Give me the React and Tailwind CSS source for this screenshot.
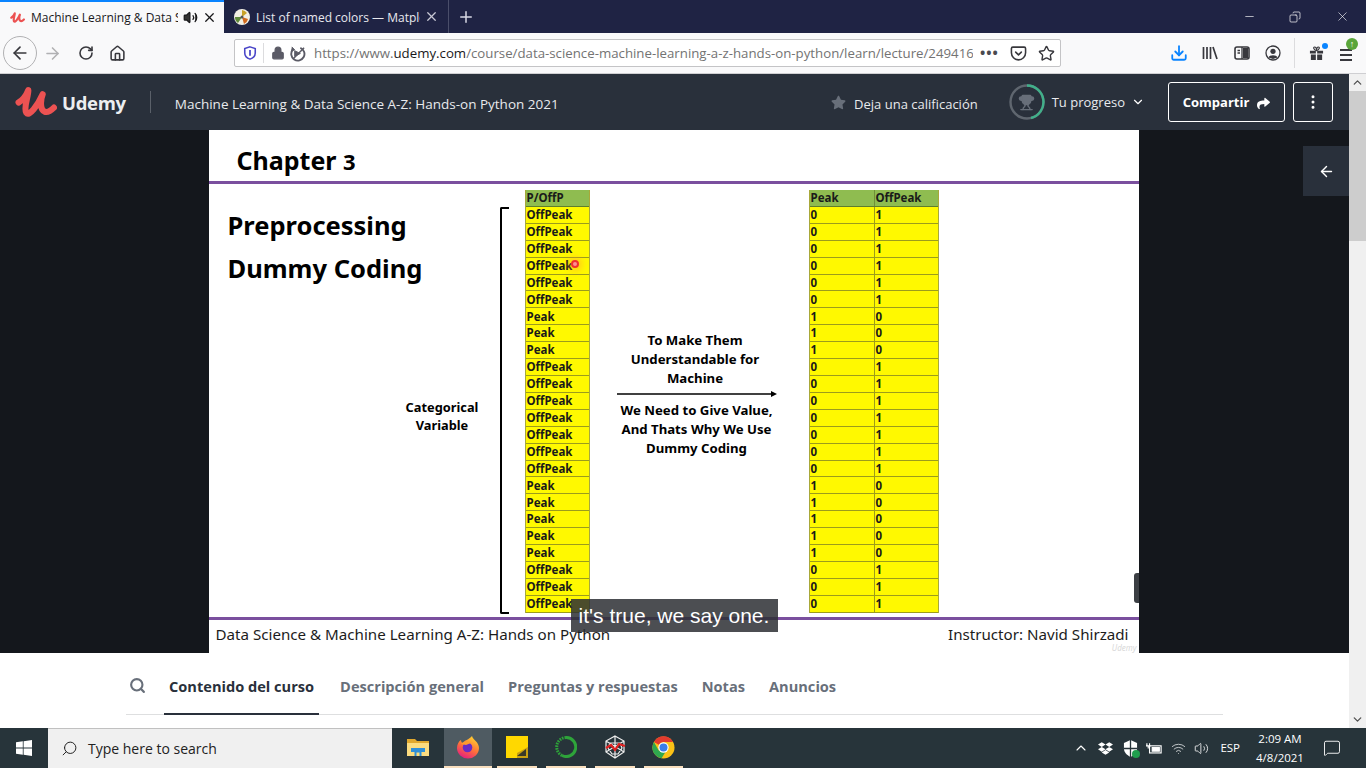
import {
  ArrowLeft, ArrowRight, RotateCw, Lock, Star, Download, X, Plus, Minus, Search,
  ChevronDown, ChevronUp, EllipsisVertical, Volume2, Trophy, Wifi, MessageSquare, Copy, House, Pocket,
} from 'lucide-react'
import { FaDropbox, FaShare, FaStar } from 'react-icons/fa'

const UI = { fontFamily: '"Open Sans", "Noto Sans", sans-serif' }
const SLIDE = { fontFamily: '"Noto Sans", "Open Sans", sans-serif' }

// 24 data rows of the slide table
const ROWS = [
  ...Array(6).fill(0), ...Array(3).fill(1), ...Array(7).fill(0), ...Array(5).fill(1), ...Array(3).fill(0),
]

function UdemyMark({ className }) {
  return (
    <svg viewBox="0 0 41 33" className={className} fill="none" stroke="#ec5252" strokeLinecap="round" strokeLinejoin="round">
      <path d="M3.5 17 C7 15 11 10 13 5 C13 12 8 22 11 27 C14 31 22 20 27 9 C25 14 24 24 29 26 C32 27 35 25 38 22" strokeWidth="6" />
    </svg>
  )
}

function TabStrip() {
  return (
    <div className="h-[33px] bg-[#1f2344] flex items-stretch text-[12px]" style={UI}>
      <div className="w-[224px] bg-[#f9f9fa] border-t-2 border-[#0a84ff] flex items-center text-[#18181a]">
        <UdemyMark className="w-[15px] h-[13px] ml-[10px] shrink-0" />
        <span className="ml-[6px] w-[147px] pt-px overflow-hidden whitespace-nowrap">Machine Learning &amp; Data Science</span>
        <Volume2 size={15} className="ml-[5px] shrink-0" fill="#333" />
        <X size={15} className="ml-[4px] shrink-0" />
      </div>
      <div className="w-[225px] flex items-center text-[#e8e8ee] border-r border-[#4a4e6a]">
        <svg viewBox="0 0 16 16" className="w-4 h-4 ml-[10px] shrink-0">
          <circle cx="8" cy="8" r="8" fill="#f2efe4" />
          <path d="M8 8 L8 1 A7 7 0 0 1 13 4Z" fill="#c9a227" />
          <path d="M8 8 L14 10 A7 7 0 0 1 10 15Z" fill="#d2691e" />
          <path d="M8 8 L4 14 A7 7 0 0 1 1 8Z" fill="#5f8a3a" />
          <circle cx="8" cy="8" r="1.5" fill="#555" />
        </svg>
        <span className="ml-[6px] w-[164px] pt-[3px] overflow-hidden whitespace-nowrap">List of named colors — Matplotlib</span>
        <X size={15} className="ml-[4px] shrink-0 text-[#c8c8d4]" />
      </div>
      <Plus size={18} className="ml-[8px] self-center text-[#d8d8e4]" />
      <div className="flex-1" />
      <div className="flex items-center text-white">
        <Minus size={13} className="mr-[33px]" strokeWidth={1.2} />
        <Copy size={12} className="mr-[34px] -scale-x-100" strokeWidth={1.4} />
        <X size={15} className="mr-[16px]" strokeWidth={1} />
      </div>
    </div>
  )
}

function Toolbar() {
  return (
    <div className="h-[41px] bg-[#f9f9fa] border-b border-[#cfcfd2] flex items-center text-[#38383d]">
      <div className="ml-[3px] w-[34px] h-[34px] rounded-full border border-[#b1b1b3] flex items-center justify-center">
        <ArrowLeft size={20} />
      </div>
      <ArrowRight size={19} className="ml-[6px] text-[#b1b1b3]" />
      <RotateCw size={16} strokeWidth={2.4} className="ml-[16px]" />
      <House size={17} strokeWidth={2.2} className="ml-[15px]" />

      <div className="ml-[108px] w-[827px] h-[28px] bg-white border border-[#c4c4c6] rounded-[2px] flex items-center">
        <svg viewBox="0 0 16 16" className="w-[14px] h-[14px] ml-[8px]">
          <path d="M8 1 L14 3 V8 C14 11.5 11 14 8 15 C5 14 2 11.5 2 8 V3Z" fill="none" stroke="#4a46c8" strokeWidth="1.8" />
          <path d="M8 4.5 V11" stroke="#4a46c8" strokeWidth="2" />
        </svg>
        <div className="w-px h-[20px] bg-[#dcdcde] ml-[6px]" />
        <Lock size={14} fill="#5b5b66" className="ml-[7px] text-[#5b5b66]" />
        <svg viewBox="0 0 18 18" className="ml-[4px] w-[17px] h-[17px]" fill="none" stroke="#5b5b66" strokeWidth="2">
          <path d="M4 5 A7 7 0 1 0 12 3" />
          <path d="M3 2 L6 5 L2 7" fill="#5b5b66" strokeWidth="1" />
          <path d="M6 6 L12 9 L6 12Z" fill="#5b5b66" strokeWidth="1" />
          <path d="M4 15 L16 3" strokeWidth="1.6" />
        </svg>
        <div className="ml-[8px] w-[659px] pt-[2px] overflow-hidden whitespace-nowrap text-[13.25px] text-[#737373]" style={UI}>
          https://www.<span className="text-[#18181a]">udemy.com</span>/course/data-science-machine-learning-a-z-hands-on-python/learn/lecture/249416
        </div>
        <span className="ml-[7px] text-[#4a4a4f] text-[14px] font-bold leading-none tracking-[1px]">•••</span>
        <Pocket size={17} strokeWidth={2.2} className="ml-[11px]" />
        <Star size={17} strokeWidth={2} className="ml-[11px]" />
      </div>

      <div className="ml-[109px] flex items-center">
        <Download size={18} strokeWidth={2.4} className="text-[#0a84ff]" />
        <svg viewBox="0 0 16 16" className="ml-[14px] w-[16px] h-[16px]" fill="none" stroke="#38383d" strokeWidth="1.7">
          <path d="M1.5 2 V14 M5 2 V14 M8.5 2 V14 M11 2 L15 14" />
        </svg>
        <svg viewBox="0 0 16 16" className="ml-[16px] w-[16px] h-[16px]" fill="none" stroke="#38383d" strokeWidth="1.6">
          <rect x="1" y="2" width="14" height="12" rx="2" />
          <path d="M8 2 V14 M3.5 5.5 H6 M3.5 8 H6" strokeWidth="1.3" />
          <rect x="9" y="3" width="5" height="10" fill="#38383d" stroke="none" />
        </svg>
        <svg viewBox="0 0 16 16" className="ml-[15px] w-[16px] h-[16px]" fill="none" stroke="#38383d" strokeWidth="1.3">
          <circle cx="8" cy="8" r="7" />
          <circle cx="8" cy="6.3" r="2.6" fill="#38383d" stroke="none" />
          <path d="M3.5 12.5 C4.5 9.5 11.5 9.5 12.5 12.5 L8 14Z" fill="#38383d" stroke="none" />
        </svg>
        <div className="w-px h-[30px] bg-[#dcdcde] ml-[13px]" />
        <div className="relative ml-[14px]">
          <svg viewBox="0 0 16 16" className="w-[15px] h-[15px]" fill="#38383d">
            <path d="M1 5 H7.3 V8 H1Z M8.7 5 H15 V8 H8.7Z M2 9 H7.3 V15 H2Z M8.7 9 H14 V15 H8.7Z" />
            <path d="M8 5 C5 4 4 1 6 1 C7.5 1 8 3.5 8 5 C8 3.5 8.5 1 10 1 C12 1 11 4 8 5Z" fill="none" stroke="#38383d" strokeWidth="1.2" />
          </svg>
          <span className="absolute -top-[3px] -right-[4px] w-[6px] h-[6px] rounded-full bg-[#0a84ff]" />
        </div>
        <div className="relative ml-[16px] w-[12px] flex flex-col gap-[3px] pt-[3px]">
          <div className="h-[2px] bg-[#38383d]" />
          <div className="h-[2px] bg-[#38383d]" />
          <div className="h-[2px] bg-[#38383d]" />
          <span className="absolute -top-[8px] -right-[6px] w-[12px] h-[12px] rounded-full bg-[#5aa53a] flex items-center justify-center text-white text-[9px] font-bold leading-none">↑</span>
        </div>
      </div>
    </div>
  )
}

function CourseHeader() {
  return (
    <div className="h-[56px] bg-[#29303b] flex items-center text-white" style={UI}>
      <UdemyMark className="w-[42px] h-[34px] ml-[15px]" />
      <span className="ml-[5px] pt-[1px] text-[18.5px] font-bold text-[#eceef0] tracking-[-0.3px]">Udemy</span>
      <div className="ml-[24px] w-px h-[22px] bg-[#5a6069]" />
      <span className="ml-[24px] pt-[5px] text-[13.5px] text-[#e8eaed] whitespace-nowrap">Machine Learning &amp; Data Science A-Z: Hands-on Python 2021</span>
      <div className="flex-1" />
      <FaStar size={15} className="text-[#686f7a]" />
      <span className="ml-[8px] pt-[5px] text-[13px] text-[#e8eaed]">Deja una calificación</span>
      <div className="relative ml-[31px] w-[36px] h-[36px] flex items-center justify-center">
        <svg viewBox="0 0 36 36" className="absolute w-full h-full">
          <circle cx="18" cy="18" r="16.5" fill="none" stroke="#5f666f" strokeWidth="2.4" />
          <path d="M18 1.5 A16.5 16.5 0 0 1 22 34" fill="none" stroke="#41b08a" strokeWidth="2.4" />
        </svg>
        <Trophy size={17} fill="#686f7a" className="text-[#686f7a]" />
      </div>
      <span className="ml-[7px] pt-[2px] text-[13px] text-[#e8eaed]">Tu progreso</span>
      <ChevronDown size={14} className="ml-[6px]" />
      <div className="ml-[23px] w-[117px] h-[40px] pt-[2px] border border-white rounded-[3px] flex items-center justify-center text-[13px] font-bold">
        Compartir
        <FaShare size={13} className="ml-[8px]" />
      </div>
      <div className="ml-[8px] w-[40px] h-[40px] border border-white rounded-[3px] flex items-center justify-center">
        <EllipsisVertical size={18} />
      </div>
      <div className="w-[16px]" />
    </div>
  )
}

function SlideTable({ headers, renderRow, widths }) {
  return (
    <div className="flex flex-col border-x border-[#a8a83a] shrink-0" style={SLIDE}>
      <div className="h-[16.92px] flex bg-[#8fbc50] border-b border-[#5f7f2c] text-[11.5px] leading-none font-bold text-[#1a1a1a]">
        {headers.map((h, i) => (
          <div key={h} className={`${widths[i]} ${i ? 'border-l border-[#6f8f38]' : ''} pl-px flex items-center`}>{h}</div>
        ))}
      </div>
      {ROWS.map((v, r) => (
        <div key={r} className="h-[16.92px] flex bg-[#fff900] border-b border-[#9c9c1c] text-[11.5px] leading-none font-bold text-[#1a1a1a]">
          {renderRow(v).map((c, i) => (
            <div key={i} className={`${widths[i]} ${i ? 'border-l border-[#9c9c1c]' : ''} pl-px flex items-center`}>{c}</div>
          ))}
        </div>
      ))}
    </div>
  )
}

function Slide() {
  return (
    <div className="relative w-[930px] h-[523px] bg-white flex flex-col text-black" style={SLIDE}>
      <div className="h-[54px] border-b-[3px] border-[#7a4f9e] pl-[28px] pt-[13px] text-[25px] leading-[34px] font-bold">
        Chapter <span className="text-[22px]">3</span>
      </div>

      <div className="flex-1 flex min-h-0">
        <div className="w-[197px] pl-[19px] pt-[20px] shrink-0 text-[25.5px] leading-[43px] font-bold whitespace-nowrap">
          <div>Preprocessing</div>
          <div>Dummy Coding</div>
        </div>
        <div className="w-[73px] shrink-0 pt-[214px] text-center text-[12.8px] leading-[18px] font-bold whitespace-nowrap">
          <div>Categorical</div>
          <div>Variable</div>
        </div>
        <div className="ml-[21px] mt-[23px] h-[407px] w-[9px] shrink-0 border-y-2 border-l-2 border-black rounded-l-[2px]" />
        <div className="ml-[16px] mt-[6px]">
          <SlideTable headers={['P/OffP']} widths={['w-[63px]']} renderRow={v => [v ? 'Peak' : 'OffPeak']} />
        </div>
        <div className="w-[211px] mr-[8px] shrink-0 pt-[147px] flex flex-col items-center text-[13.2px] leading-[19px] font-bold text-center">
          <div>To Make Them<br />Understandable for<br />Machine</div>
          <svg viewBox="0 0 160 6" className="w-[160px] h-[6px] mt-[3px] ml-[4px]">
            <path d="M0 3 H155" stroke="#000" strokeWidth="1.6" />
            <path d="M154 0 L160 3 L154 6Z" fill="#000" />
          </svg>
          <div className="mt-[4px] ml-[3px]">We Need to Give Value,<br />And Thats Why We Use<br />Dummy Coding</div>
        </div>
        <div className="mt-[6px]">
          <SlideTable headers={['Peak', 'OffPeak']} widths={['w-[64px]', 'w-[64px]']} renderRow={v => [v, v ? 0 : 1]} />
        </div>
      </div>

      <div className="h-[36px] border-t-[3px] border-[#7a4f9e] flex items-center justify-between pl-[7px] pr-[10px] pb-[5px] text-[15.15px] text-[#1c1c1c] whitespace-nowrap">
        <span>Data Science &amp; Machine Learning A-Z: Hands on Python</span>
        <span>Instructor: Navid Shirzadi</span>
      </div>

      {/* cursor highlight, caption and player handle sit over the slide */}
      <span className="absolute left-[362px] top-[130px] w-[8px] h-[8px] rounded-full border-2 border-[#f03030] bg-[#ff9090] shadow-[0_0_6px_3px_rgba(255,150,60,0.45)]" />
      <span className="absolute right-0 top-[443px] w-[5px] h-[30px] rounded-l-[3px] bg-[#3c3f44]" />
      <span className="absolute right-[2px] bottom-0 text-[8px] leading-[10px] italic text-[#d8d8d8]">Udemy</span>
      <div className="absolute left-[362px] top-[469px] w-[207px] h-[33px] bg-[#2d2f34]/85 flex items-center justify-center text-[21px] text-white whitespace-nowrap" style={{ fontFamily: '"Liberation Sans", sans-serif' }}>
        it's true, we say one.
      </div>
    </div>
  )
}

function CourseTabs() {
  const tabs = ['Descripción general', 'Preguntas y respuestas', 'Notas', 'Anuncios']
  return (
    <div className="h-[75px] bg-white pl-[126px] pr-[126px]" style={UI}>
      <div className="h-[62px] border-b border-[#dedfe0] flex items-stretch text-[14.6px] font-bold text-[#686f7a] whitespace-nowrap">
        <div className="w-[38px] pl-[3px] pt-[24px]">
          <Search size={17} strokeWidth={3} className="text-[#686f7a]" />
        </div>
        <div className="h-[62px] px-[5px] pt-[23px] border-b-2 border-[#29303b] text-[#29303b]">Contenido del curso</div>
        {tabs.map((t, i) => (
          <div key={t} className={`${i === 0 ? 'ml-[21px]' : 'ml-[24px]'} pt-[23px]`}>{t}</div>
        ))}
      </div>
    </div>
  )
}

function Taskbar() {
  return (
    <div className="h-[40px] bg-[#27343a] flex items-stretch text-white" style={UI}>
      <div className="w-[48px] flex items-center justify-center">
        <svg viewBox="0 0 16 16" className="w-[16px] h-[16px]" fill="#fff">
          <path d="M0 2.3 L6.8 1.3 V7.6 H0Z M7.6 1.2 L16 0 V7.6 H7.6Z M0 8.4 H6.8 V14.7 L0 13.7Z M7.6 8.4 H16 V16 L7.6 14.8Z" />
        </svg>
      </div>
      <div className="w-[344px] bg-[#f0f0f0] border-t border-[#c0c0c0] flex items-center text-[#222] text-[14px]">
        <Search size={17} className="ml-[13px] -scale-x-100" strokeWidth={1.4} />
        <span className="ml-[10px]">Type here to search</span>
      </div>
      <div className="w-[52px] flex items-center justify-center">
        <svg viewBox="0 0 22 20" className="w-[22px] h-[20px]">
          <path d="M0 1 H8 L10 3 H22 V18 H0Z" fill="#e0a82e" />
          <path d="M0 5 H22 V18 H0Z" fill="#fbdc80" />
          <path d="M4 10 H18 V14 H14.5 V18 H7.5 V14 H4Z M9.5 14.5 V18 H12.5 V14.5Z" fill="#2f8fd8" fillRule="evenodd" />
        </svg>
      </div>
      <div className="w-[48px] bg-[#4f5b62] border-b-2 border-[#f9dfbe] flex items-center justify-center">
        <svg viewBox="0 0 24 24" className="w-[24px] h-[24px]">
          <defs>
            <linearGradient id="ff" x1="0.7" y1="0" x2="0.2" y2="1">
              <stop offset="0" stopColor="#ffd230" />
              <stop offset="0.5" stopColor="#ff7139" />
              <stop offset="1" stopColor="#e31587" />
            </linearGradient>
          </defs>
          <path d="M16 1 C17 5 23 7 23 13 A11 10.5 0 0 1 1 13 C1 9 3 6 5 5 C5 7 6 8 7 8 C8 5 13 5 16 1Z" fill="url(#ff)" />
          <circle cx="11.5" cy="12.5" r="4.8" fill="#6a2bc4" />
          <path d="M5 9 C8 6 13 6 15 8 L10 10Z" fill="#ff9a2e" />
        </svg>
      </div>
      <div className="ml-[5px] w-[40px] border-b-2 border-[#f9dfbe] flex items-center justify-center">
        <svg viewBox="0 0 22 22" className="w-[22px] h-[22px]">
          <path d="M0 0 H22 V22 H0Z" fill="#ffd800" />
          <path d="M22 11 V22 H11 V17Z" fill="#c9a010" />
          <path d="M20 13 L11 20 L20 20Z" fill="#3a3a28" />
        </svg>
      </div>
      <div className="ml-[9px] w-[40px] border-b-2 border-[#f9dfbe] flex items-center justify-center">
        <svg viewBox="0 0 22 22" className="w-[22px] h-[22px]" fill="none" stroke="#2ea43a" strokeWidth="3">
          <path d="M11 1.5 A9.5 9.5 0 1 1 7 19.5" />
          <path d="M7 19.5 A9.5 9.5 0 0 1 11 1.5" strokeDasharray="1.6 1" />
        </svg>
      </div>
      <div className="ml-[9px] w-[40px] border-b-2 border-[#f9dfbe] flex items-center justify-center">
        <svg viewBox="0 0 24 24" className="w-[24px] h-[24px]" fill="none" stroke="#eee" strokeWidth="1.2">
          <path d="M12 1 L21 6 L21 17 L12 23 L3 17 L3 6Z M12 1 V23 M3 6 L21 17 M21 6 L3 17 M7 8 L17 8 L19 13 L15 19 L9 19 L5 13Z" />
          <path d="M3 13 L8 10 L12 15 L16 9 L22 11" stroke="#e02020" strokeWidth="2.2" />
        </svg>
      </div>
      <div className="ml-[9px] w-[39px] border-b-2 border-[#f9dfbe] flex items-center justify-center">
        <svg viewBox="0 0 24 24" className="w-[23px] h-[23px]">
          <circle cx="12" cy="12" r="11.5" fill="#fbc116" />
          <path d="M2 6.2 A11.5 11.5 0 0 1 22 6.2 L12 6.2 A5.8 5.8 0 0 0 7 9Z" fill="#e33b2e" />
          <path d="M2 6.2 A11.5 11.5 0 0 0 10 23.3 L15 15 L7 15Z" fill="#2fa84f" />
          <circle cx="12" cy="12" r="5.4" fill="#fff" />
          <circle cx="12" cy="12" r="4.2" fill="#3b7de8" />
        </svg>
      </div>
      <div className="flex-1" />
      <div className="flex items-center">
        <ChevronUp size={16} strokeWidth={1.6} />
        <FaDropbox size={15} className="ml-[9px]" />
        <div className="relative ml-[10px]">
          <svg viewBox="0 0 16 18" className="w-[15px] h-[17px]">
            <path d="M8 0 L15 3 V9 C15 13 12 16 8 18 C4 16 1 13 1 9 V3Z" fill="#fff" />
            <path d="M8 0 V18 M1 9 H15" stroke="#27343a" strokeWidth="1.4" />
          </svg>
          <span className="absolute -right-[2px] -bottom-px w-[8px] h-[8px] rounded-full bg-[#1f9d4d]" />
        </div>
        <svg viewBox="0 0 18 14" className="ml-[8px] w-[16px] h-[13px]" fill="none" stroke="#fff" strokeWidth="1.3">
          <rect x="4" y="4" width="13" height="8" />
          <rect x="7" y="6" width="8" height="4" fill="#fff" />
          <path d="M1 1 V4 M4 1 V4 M0 4 H5 M2.5 7 V4" />
        </svg>
        <Wifi size={15} className="ml-[9px] text-[#c8ccce]" strokeWidth={1.5} />
        <Volume2 size={15} className="ml-[8px]" strokeWidth={1.3} />
        <span className="ml-[11px] text-[11.5px]">ESP</span>
        <div className="ml-[10px] w-[60px] text-center text-[11.5px] leading-[19px]">
          <div>2:09 AM</div>
          <div>4/8/2021</div>
        </div>
        <MessageSquare size={18} strokeWidth={1.2} className="ml-[13px] mr-[25px]" />
      </div>
    </div>
  )
}

export default function App() {
  return (
    <div className="w-[1366px] h-[768px] overflow-hidden flex flex-col bg-white">
      <TabStrip />
      <Toolbar />
      <div className="h-[654px] flex">
        <div className="w-[1349px] flex flex-col">
          <CourseHeader />
          <div className="relative h-[523px] bg-[#14171c] flex justify-center pr-[2px]">
            <Slide />
            {/* sidebar toggle floats over the player */}
            <div className="absolute right-0 top-[16px] w-[46px] h-[50px] bg-[#29303b] flex items-center justify-center">
              <ArrowLeft size={17} className="text-white" />
            </div>
          </div>
          <CourseTabs />
        </div>
        <div className="w-[17px] bg-[#f0f0f0] flex flex-col items-center">
          <ChevronUp size={13} className="h-[17px] text-[#505050]" strokeWidth={2.4} />
          <div className="w-full h-[150px] bg-[#cdcdcd]" />
          <div className="flex-1" />
          <ChevronDown size={13} className="h-[17px] text-[#505050]" strokeWidth={2.4} />
        </div>
      </div>
      <Taskbar />
    </div>
  )
}
